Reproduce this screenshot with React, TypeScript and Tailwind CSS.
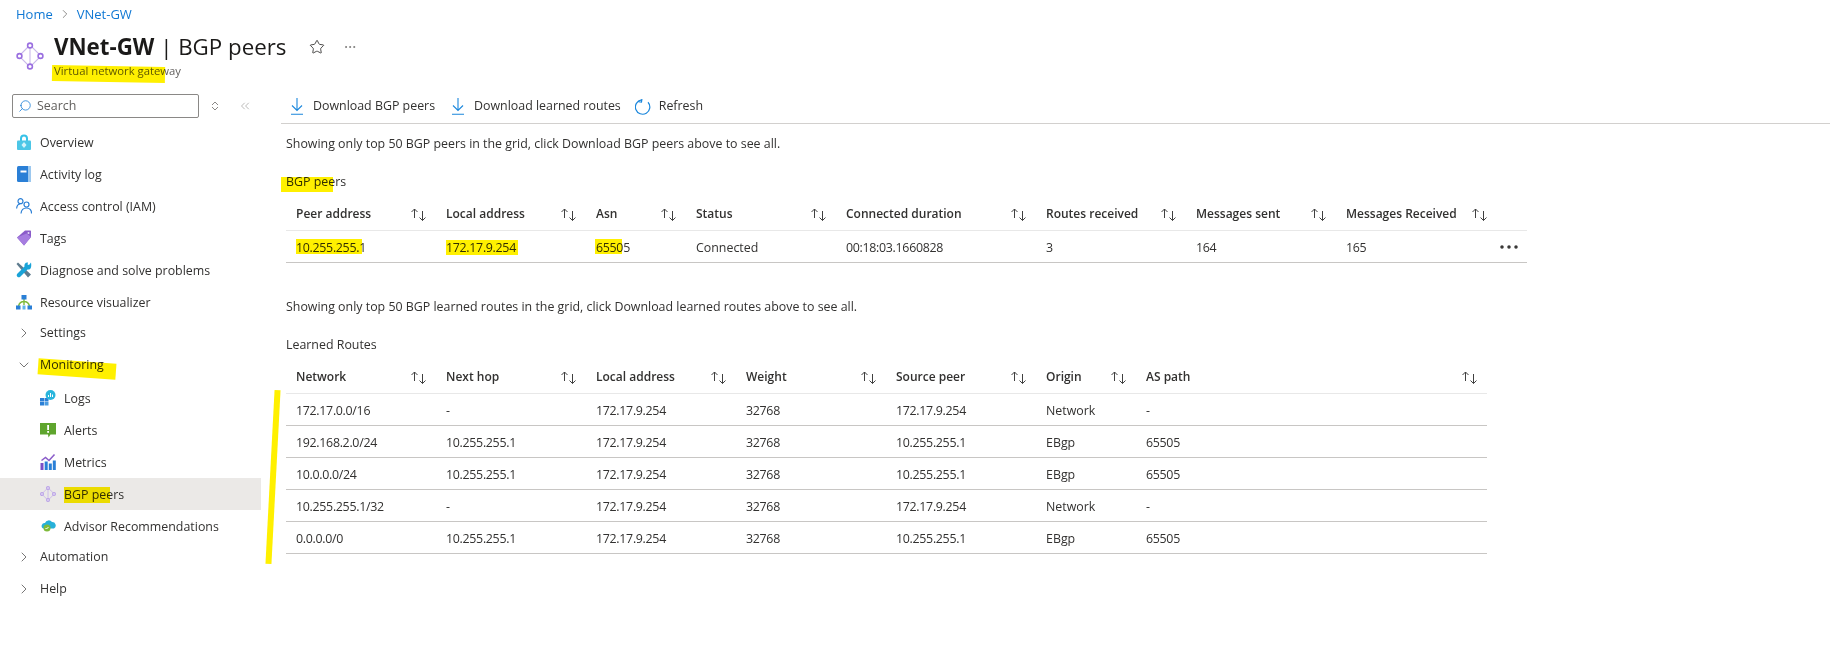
import React from 'react';
import { ChevronRight, ChevronDown, ChevronsLeft, Search, Star, MoreHorizontal } from 'lucide-react';

const Gateway = ({ size = 28, faded = false }: { size?: number; faded?: boolean }) => (
  <svg width={size} height={size} viewBox="0 0 28 28" fill="none" stroke={faded ? '#b9a0e6' : '#9a6fe0'} strokeWidth={faded ? 2.2 : 1.6}>
    <path d="M14 3L3 14l11 11 11-11z" stroke="#c9b8ea" strokeWidth={faded ? 1.6 : 1.1} />
    <path d="M14 3v22" stroke="#c9b8ea" strokeWidth={faded ? 1.6 : 1.1} />
    <circle cx="14" cy="3.500" r="2.400" fill="#fff" />
    <circle cx="14" cy="24.500" r="2.400" fill="#fff" />
    <circle cx="3.500" cy="14" r="2.400" fill="#fff" />
    <circle cx="24.500" cy="14" r="2.400" fill="#fff" />
  </svg>
);

const Overview = () => (
  <svg width="14" height="16" viewBox="0 0 14 16"><path d="M3 7V4.500a4 4 0 018 0V7H9V4.500a2 2 0 00-4 0V7z" fill="#37c2e8" /><rect y="6.500" width="14" height="9.500" rx="1" fill="#4cc6e6" /><path d="M7 8l2.500 3L7 14l-2.500-3z" fill="#d3f3fb" /></svg>
);
const ActivityLog = () => (
  <svg width="14" height="16" viewBox="0 0 14 16"><rect width="14" height="16" rx="1.500" fill="#2a7fd6" /><rect x="11" width="3" height="16" fill="#9cc8ef" /><rect x="3.500" y="4.500" width="6" height="2" fill="#fff" /></svg>
);
const Iam = () => (
  <svg width="16" height="16" viewBox="0 0 16 16" fill="none" stroke="#2a7fd6" strokeWidth="1.200"><circle cx="4.500" cy="3.200" r="2.500" /><circle cx="10.500" cy="6.500" r="2.500" /><path d="M.6 10.500c.3-2.700 1.800-4.500 3.600-4.500M5 15.500c.3-3.500 2.500-5.500 5.500-5.500s5.200 2 5 5.500" /></svg>
);
const Tags = () => (
  <svg width="14" height="16" viewBox="0 0 14 16"><path d="M0 7.500L8 .5h5c.6 0 1 .4 1 1V7l-7 8.500z" fill="#8a5cc9" /><path d="M0 7.500l7 8 7-8.500-4.500-3.500z" fill="#a67de0" /><circle cx="11.500" cy="3" r="1" fill="#e6dcf7" /></svg>
);
const Wrench = () => (
  <svg width="16" height="16" viewBox="0 0 16 16"><path d="M2 .5L.5 2l11.500 13.500 3-3z" fill="#5e7b8e" /><path d="M15 .5L13 3l-1.500-.5L12 .5C9.500 0 8 2 8.500 4.500L1 12a2.200 2.200 0 003 3l7.500-7.500C14 8 16 6.500 15 .5z" fill="#19a3d8" /></svg>
);
const Visualizer = () => (
  <svg width="16" height="15" viewBox="0 0 16 15"><path d="M8 4v6M2.500 11c.8-3 3-4.500 5.500-4.500s4.700 1.500 5.500 4.500" fill="none" stroke="#7fba3a" strokeWidth="1.400" /><rect x="5.500" width="5" height="4.500" fill="#2a7fd6" /><rect y="10.500" width="4.500" height="4" fill="#2a7fd6" /><rect x="11.500" y="10.500" width="4.500" height="4" fill="#2a7fd6" /><rect x="6.500" y="10.500" width="3" height="4" fill="#5fb4e8" /></svg>
);
const Logs = () => (
  <svg width="16" height="16" viewBox="0 0 16 16"><rect y="8" width="4" height="3.500" fill="#2a7fd6" /><rect y="12" width="4" height="3.500" fill="#2a7fd6" /><rect x="4.500" y="8" width="4" height="3.500" fill="#2a7fd6" /><rect x="4.500" y="12" width="4" height="3.500" fill="#4b9be0" /><circle cx="10.500" cy="5" r="5" fill="#29b5dc" /><path d="M8.500 7V5M10.500 7V3M12.500 7V4.500" stroke="#fff" strokeWidth="1" /></svg>
);
const Alerts = () => (
  <svg width="16" height="15" viewBox="0 0 16 15"><path d="M0 0h16v11.500h-5.500l-2 3-.5-3H0z" fill="#5fa52e" /><rect x="7.200" y="2" width="1.800" height="5" fill="#fff" /><rect x="7.200" y="8" width="1.800" height="1.800" fill="#fff" /></svg>
);
const Metrics = () => (
  <svg width="16" height="16" viewBox="0 0 16 16"><rect x=".5" y="9" width="3" height="7" fill="#7b4fc7" /><rect x="4.700" y="7.500" width="3" height="8.500" fill="#2a7fd6" /><rect x="8.800" y="9.500" width="3" height="6.500" fill="#2a7fd6" /><rect x="12.800" y="6.500" width="3" height="9.500" fill="#2a7fd6" /><path d="M1.500 6.500L5.500 3.500l3.500 3 5.500-6" fill="none" stroke="#8a5cc9" strokeWidth="1.500" /></svg>
);
const Advisor = () => (
  <svg width="16" height="14" viewBox="0 0 16 14"><path d="M5 4a4 4 0 017-1 3.500 3.500 0 012 6.500H3a3 3 0 012-5.500z" fill="#27b0d9" /><circle cx="7" cy="9" r="3.500" fill="#7fba3a" /><path d="M5.500 9l1 1 2-2" stroke="#fff" fill="none" /></svg>
);
const DownloadIcon = () => (
  <svg width="12" height="17" viewBox="0 0 12 17" fill="none" stroke="#1b87dc" strokeWidth="1.100"><path d="M6 0v12.500M1 7.500l5 5 5-5M0 16.300h12" /></svg>
);
const RefreshIcon = () => (
  <svg width="16" height="16" viewBox="0 0 16 16" fill="none" stroke="#1b87dc" strokeWidth="1.200"><path d="M5.500 1.200A7.200 7.200 0 1012.300 2.600M5.800 .2v3.200h-3" transform="rotate(8 8 8)" /></svg>
);

const NavItem = ({ icon, label, indent = false, active = false }: { icon: React.ReactNode; label: string; indent?: boolean; active?: boolean }) => (
  <div className={`flex h-8 items-center gap-2 ${indent ? 'pl-10' : 'pl-4'} ${active ? 'bg-[#ebe9e7]' : ''}`}>
    <span className="flex w-4 shrink-0 items-center justify-center">{icon}</span>
    <span className="pt-[2px]">{label}</span>
  </div>
);

const GroupItem = ({ label, open = false }: { label: string; open?: boolean }) => (
  <div className="flex h-8 items-center gap-2 pb-[3px] pl-4">
    <span className="flex w-4 items-center justify-center text-[#323130]">
      {open ? <ChevronDown size={18} strokeWidth={1} /> : <ChevronRight size={18} strokeWidth={1} />}
    </span>
    <span className="pt-[2px]">{label}</span>
  </div>
);

const Sort = () => (
  <svg width="17" height="13" viewBox="0 0 17 13" fill="none" stroke="#404040" strokeWidth="1" className="shrink-0">
    <path d="M4.500 10V1M1.500 4l3-3 3 3M12.500 3v9.500M9.500 9.500l3 3 3-3" />
  </svg>
);

const Highlight = ({ className }: { className: string }) => (
  <span className={`pointer-events-none absolute bg-[#fff000] mix-blend-multiply ${className}`} />
);

type Col = { label: string; width: string };

const Grid = ({ cols, rows, width, more = false }: { cols: Col[]; rows: string[][]; width: string; more?: boolean }) => (
  <div className={width}>
    <div className="flex h-[33px] items-center border-b border-[#e8e8e8] text-[12px] font-semibold">
      {cols.map(c => (
        <div key={c.label} className={`flex shrink-0 items-center justify-between whitespace-nowrap pl-[10px] pr-[9px] ${c.width}`}>
          <span>{c.label}</span>
          <Sort />
        </div>
      ))}
    </div>
    {rows.map((r, i) => (
      <div key={i} className="relative flex h-8 items-center border-b border-[#c8c6c4]">
        {r.map((v, j) => (
          <div key={j} className={`shrink-0 pl-[10px] pt-[4px] ${/\d/.test(v) ? 'tracking-[-0.3px]' : ''} ${cols[j].width}`}>{v}</div>
        ))}
        {more && <MoreHorizontal size={24} strokeWidth={1.500} className="absolute right-[6px] text-[#323130]" />}
      </div>
    ))}
  </div>
);

const peerCols: Col[] = [
  { label: 'Peer address', width: 'w-[150px]' },
  { label: 'Local address', width: 'w-[150px]' },
  { label: 'Asn', width: 'w-[100px]' },
  { label: 'Status', width: 'w-[150px]' },
  { label: 'Connected duration', width: 'w-[200px]' },
  { label: 'Routes received', width: 'w-[150px]' },
  { label: 'Messages sent', width: 'w-[150px]' },
  { label: 'Messages Received', width: 'w-[161px]' },
];

const routeCols: Col[] = [
  { label: 'Network', width: 'w-[150px]' },
  { label: 'Next hop', width: 'w-[150px]' },
  { label: 'Local address', width: 'w-[150px]' },
  { label: 'Weight', width: 'w-[150px]' },
  { label: 'Source peer', width: 'w-[150px]' },
  { label: 'Origin', width: 'w-[100px]' },
  { label: 'AS path', width: 'w-[351px]' },
];

const routes = [
  ['172.17.0.0/16', '-', '172.17.9.254', '32768', '172.17.9.254', 'Network', '-'],
  ['192.168.2.0/24', '10.255.255.1', '172.17.9.254', '32768', '10.255.255.1', 'EBgp', '65505'],
  ['10.0.0.0/24', '10.255.255.1', '172.17.9.254', '32768', '10.255.255.1', 'EBgp', '65505'],
  ['10.255.255.1/32', '-', '172.17.9.254', '32768', '172.17.9.254', 'Network', '-'],
  ['0.0.0.0/0', '10.255.255.1', '172.17.9.254', '32768', '10.255.255.1', 'EBgp', '65505'],
];

export default function App() {
  return (
    <div className='relative h-[662px] w-[1830px] overflow-hidden bg-white font-["Open_Sans",sans-serif] text-[12.400px] leading-none text-[#323130]'>
      <div className="flex h-[26px] items-center gap-[5px] pl-4 pt-[2px] text-[13px] text-[#0f78d4]">
        <span>Home</span>
        <ChevronRight size={14} strokeWidth={1.200} className="text-[#605e5c]" />
        <span>VNet-GW</span>
      </div>

      <div className="flex h-[60px] items-start pl-4">
        <div className="pt-4"><Gateway /></div>
        <div className="ml-[10px] pt-[7px]">
          <div className="whitespace-nowrap text-[22.300px] leading-7 text-[#1b1a19]"><span className="font-bold">VNet-GW</span> | BGP peers</div>
          <div className="mt-[3px] text-[11.300px] leading-[14px] text-[#605e5c]">Virtual network gateway</div>
        </div>
        <Star size={16} strokeWidth={1.300} className="ml-[23px] mt-[13px]" />
        <MoreHorizontal size={14} strokeWidth={1.200} className="ml-[18px] mt-[14px] text-[#605e5c]" />
      </div>

      <div className="flex">
        <aside className="w-[261px] shrink-0">
          <div className="flex h-10 items-center pl-3">
            <div className="flex h-6 w-[187px] items-center gap-[5px] rounded-[2px] border border-[#8a8886] pl-[5px] text-[#605e5c]">
              <Search size={14} strokeWidth={1.300} className="-scale-x-100 text-[#0f78d4]" />
              Search
            </div>
            <svg width="8" height="12" viewBox="0 0 8 12" fill="none" stroke="#8a8886" className="ml-3"><path d="M1 5l3-3 3 3M1 7l3 3 3-3" /></svg>
            <ChevronsLeft size={14} strokeWidth={1} className="ml-[19px] text-[#8a8886]" />
          </div>
          <NavItem icon={<Overview />} label="Overview" />
          <NavItem icon={<ActivityLog />} label="Activity log" />
          <NavItem icon={<Iam />} label="Access control (IAM)" />
          <NavItem icon={<Tags />} label="Tags" />
          <NavItem icon={<Wrench />} label="Diagnose and solve problems" />
          <NavItem icon={<Visualizer />} label="Resource visualizer" />
          <GroupItem label="Settings" />
          <GroupItem label="Monitoring" open />
          <NavItem indent icon={<Logs />} label="Logs" />
          <NavItem indent icon={<Alerts />} label="Alerts" />
          <NavItem indent icon={<Metrics />} label="Metrics" />
          <NavItem indent active icon={<Gateway size={16} faded />} label="BGP peers" />
          <NavItem indent icon={<Advisor />} label="Advisor Recommendations" />
          <GroupItem label="Automation" />
          <GroupItem label="Help" />
        </aside>

        <main className="ml-5 flex-1 pt-[5px]">
          <div className="flex h-[33px] items-center border-b border-[#d2d0ce] pb-[1px] pl-[10px]">
            <span className="flex items-center gap-[10px]"><DownloadIcon />Download BGP peers</span>
            <span className="ml-[17px] flex items-center gap-[10px]"><DownloadIcon />Download learned routes</span>
            <span className="ml-[14px] flex items-center gap-2"><RefreshIcon />Refresh</span>
          </div>
          <div className="pl-[5px]">
            <p className="mt-[13px] leading-[14px]">Showing only top 50 BGP peers in the grid, click Download BGP peers above to see all.</p>
            <h2 className="mt-[24px] leading-[14px]">BGP peers</h2>
            <div className="mt-[9px]">
              <Grid cols={peerCols} width="w-[1241px]" more rows={[['10.255.255.1', '172.17.9.254', '65505', 'Connected', '00:18:03.1660828', '3', '164', '165']]} />
            </div>
            <p className="mt-[37px] leading-[14px]">Showing only top 50 BGP learned routes in the grid, click Download learned routes above to see all.</p>
            <h2 className="mt-[24px] leading-[14px]">Learned Routes</h2>
            <div className="mt-[9px]">
              <Grid cols={routeCols} width="w-[1201px]" rows={routes} />
            </div>
          </div>
        </main>
      </div>

      <Highlight className="left-[52px] top-[66px] h-4 w-[113px] rotate-1" />
      <Highlight className="left-[38px] top-[361px] h-4 w-[78px] rotate-[4deg]" />
      <Highlight className="left-[64px] top-[487px] h-4 w-[46px]" />
      <Highlight className="left-[281px] top-[177px] h-[15px] w-[52px]" />
      <Highlight className="left-[296px] top-[239px] h-[15px] w-[66px]" />
      <Highlight className="left-[446px] top-[240px] h-[15px] w-[72px]" />
      <Highlight className="left-[595px] top-[239px] h-[15px] w-[27px]" />
      <Highlight className="left-[270px] top-[390px] h-[174px] w-[6px] rotate-[3deg]" />
    </div>
  );
}
